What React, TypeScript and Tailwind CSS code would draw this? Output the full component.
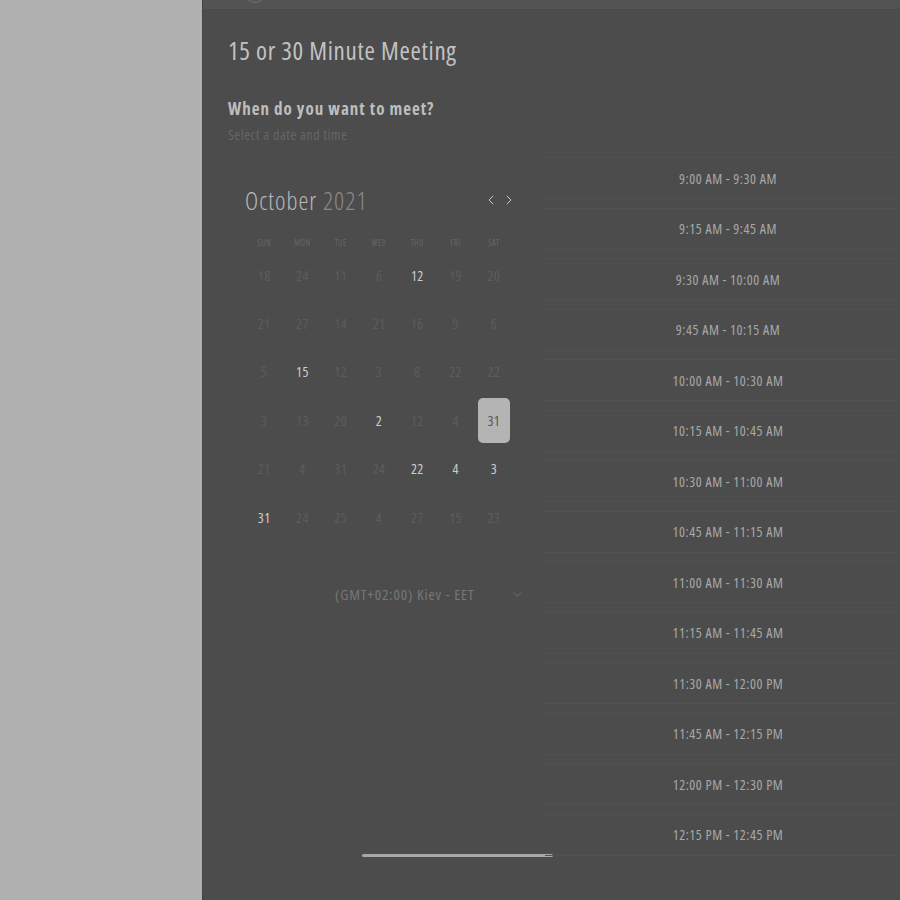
import React from "react";
import { ChevronLeft, ChevronRight, ChevronDown } from "lucide-react";

const weekDays = ["SUN", "MON", "TUE", "WED", "THU", "FRI", "SAT"];

// [day, active]
const days: [number, boolean][] = [
  [18, false], [24, false], [11, false], [6, false], [12, true], [19, false], [20, false],
  [21, false], [27, false], [14, false], [21, false], [16, false], [9, false], [6, false],
  [5, false], [15, true], [12, false], [3, false], [8, false], [22, false], [22, false],
  [3, false], [13, false], [20, false], [2, true], [12, false], [4, false], [31, true],
  [21, false], [4, false], [31, false], [24, false], [22, true], [4, true], [3, true],
  [31, true], [24, false], [25, false], [4, false], [27, false], [15, false], [23, false],
];

const slots = [
  "9:00 AM - 9:30 AM",
  "9:15 AM - 9:45 AM",
  "9:30 AM - 10:00 AM",
  "9:45 AM - 10:15 AM",
  "10:00 AM - 10:30 AM",
  "10:15 AM - 10:45 AM",
  "10:30 AM - 11:00 AM",
  "10:45 AM - 11:15 AM",
  "11:00 AM - 11:30 AM",
  "11:15 AM - 11:45 AM",
  "11:30 AM - 12:00 PM",
  "11:45 AM - 12:15 PM",
  "12:00 PM - 12:30 PM",
  "12:15 PM - 12:45 PM",
];

const SELECTED = 27;

export default function App() {
  return (
    <div className="flex h-[900px] w-full overflow-hidden font-['Open_Sans','Noto_Sans',sans-serif] font-stretch-condensed">
      {/* Backdrop side */}
      <div className="w-[202px] flex-none bg-[#b0b0b0]" />

      {/* Booking panel */}
      <div className="flex flex-1 flex-col border-l border-[#444] bg-[#4c4c4c]">
        {/* Header strip */}
        <div className="h-[10px] flex-none overflow-hidden border-b border-[#4a4a4a] bg-[#535353]">
          <div className="-mt-[21px] ml-[40px] h-[24px] w-[24px] rounded-full border border-[#6e6e6e] bg-[#585858]" />
        </div>

        <div className="pl-[25px] pt-[24px]">
          <h1 className="text-[25px] leading-[32px] tracking-[0.7px] text-[#c2c2c2]">
            15 or 30 Minute Meeting
          </h1>
          <h2 className="mt-[32px] text-[17px] font-bold leading-[22px] tracking-[1px] text-[#bebebe]">
            When do you want to meet?
          </h2>
          <p className="mt-[6px] text-[14px] leading-[18px] tracking-[0.6px] text-[#666]">
            Select a date and time
          </p>
        </div>

        <div className="flex flex-1 pt-[13px]">
          {/* Calendar */}
          <div className="flex w-[342px] flex-none flex-col pl-[42px] pt-[27px]">
            <div className="flex w-[268px] items-center justify-between">
              <div className="text-[25px] font-light leading-[32px] tracking-[1px]">
                <span className="text-[#b8b8b8]">October</span>{" "}
                <span className="text-[#8a8a8a]">2021</span>
              </div>
              <div className="-mr-[4px] flex items-center gap-[2px] text-[#c4c4c4]">
                <ChevronLeft size={16} strokeWidth={1.5} />
                <ChevronRight size={16} strokeWidth={1.5} />
              </div>
            </div>

            <div className="mt-[21px] grid w-[268px] grid-cols-7">
              {weekDays.map((d) => (
                <div
                  key={d}
                  className="text-center text-[8px] leading-[12px] tracking-[0.6px] text-[#686868]"
                >
                  {d}
                </div>
              ))}
            </div>

            <div className="mt-[2px] grid w-[268px] grid-cols-7">
              {days.map(([n, active], i) => (
                <div key={i} className="flex h-[48.4px] items-center justify-center">
                  {i === SELECTED ? (
                    <div className="flex h-[45px] w-[32px] items-center justify-center rounded-[5px] bg-[#b4b4b4] text-[14px] tracking-[0.4px] text-[#555]">
                      {n}
                    </div>
                  ) : (
                    <span
                      className={`text-[14px] tracking-[0.4px] ${active ? "text-[#cccccc]" : "text-[#5c5c5c]"}`}
                    >
                      {n}
                    </span>
                  )}
                </div>
              ))}
            </div>

            <div className="mt-[32px] ml-[90px] flex h-[42px] w-[200px] items-center justify-between border-y border-[#4f4f4f] pr-[11px] text-[#777]">
              <span className="text-[15px] tracking-[0.9px]">(GMT+02:00) Kiev - EET</span>
              <ChevronDown size={13} strokeWidth={1.5} />
            </div>

            <div className="mt-auto mb-[43px] ml-[117px] h-[3px] w-[191px] rounded-full bg-[#a8a8a8]" />
          </div>

          {/* Time slots */}
          <div className="flex flex-1 flex-col gap-[8.5px]">
            {slots.map((s) => (
              <div
                key={s}
                className="flex h-[42px] items-center justify-center border-y border-[#515151] pl-[11px] text-[14px] tracking-[0.55px] text-[#a8a8a8]"
              >
                {s}
              </div>
            ))}
          </div>
        </div>
      </div>
    </div>
  );
}
